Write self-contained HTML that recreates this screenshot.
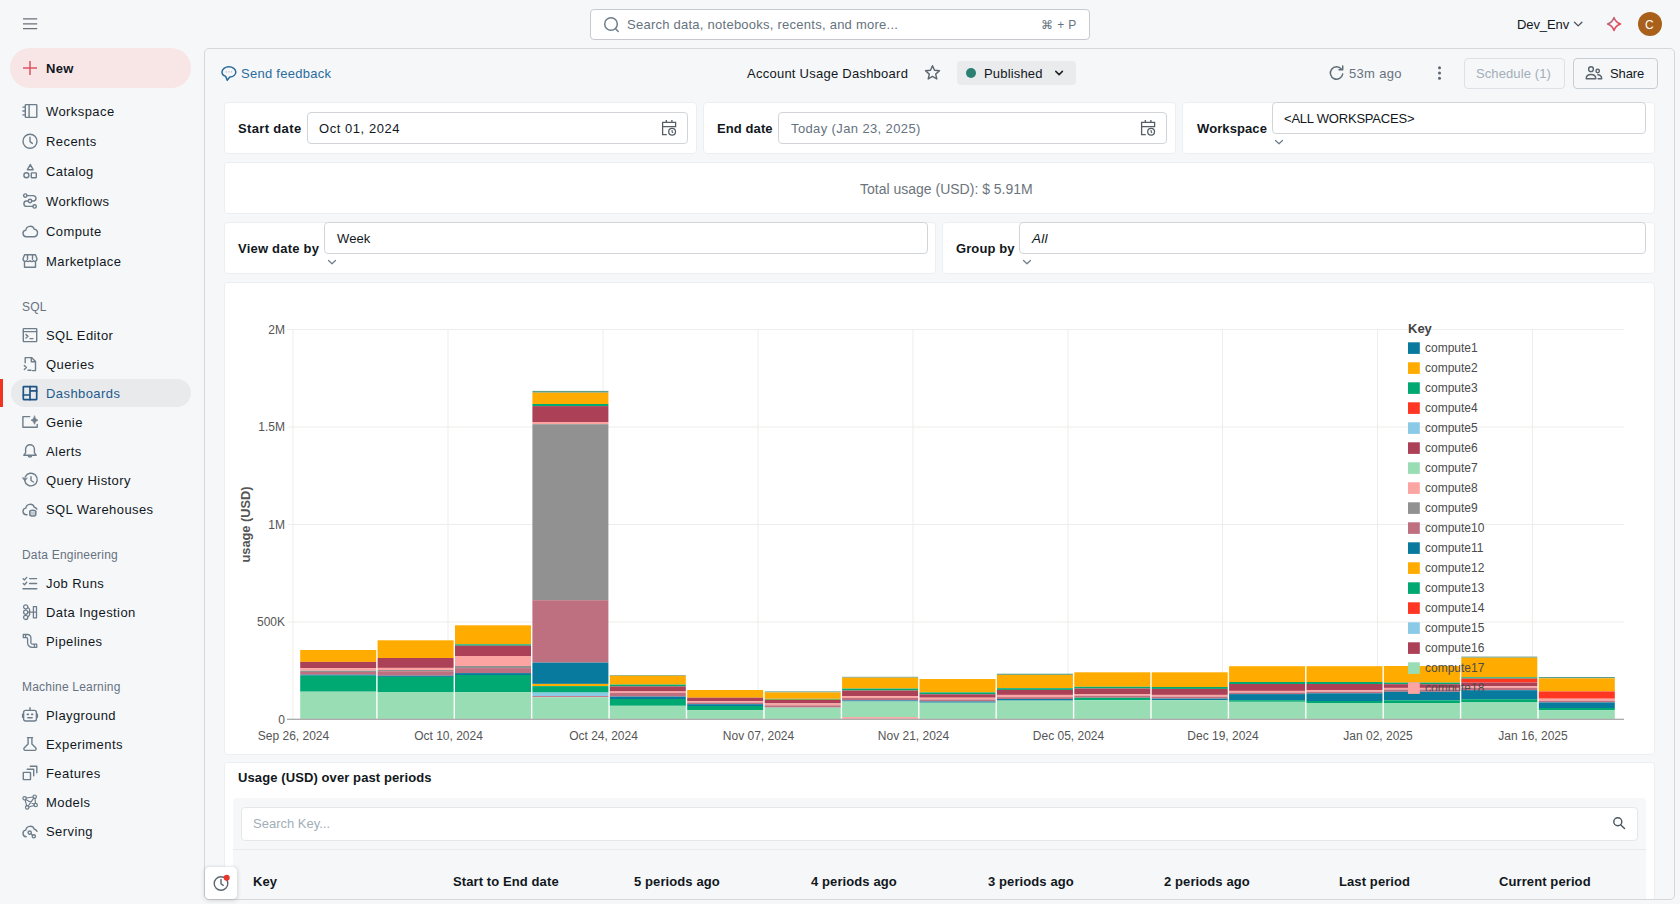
<!DOCTYPE html>
<html>
<head>
<meta charset="utf-8">
<title>Account Usage Dashboard</title>
<style>
*{box-sizing:border-box;margin:0;padding:0}
html,body{width:1680px;height:904px;overflow:hidden}
body{background:#F6F7F9;font-family:"Liberation Sans",sans-serif;color:#11171C;font-size:13px;position:relative}
.abs{position:absolute}
.t{position:absolute;white-space:nowrap;line-height:16px;letter-spacing:.35px}
.b{font-weight:bold}
svg{position:absolute;overflow:visible}
.ic{fill:none;stroke:#6E7D8A;stroke-width:1.4;stroke-linecap:round;stroke-linejoin:round}
/* sidebar */
.nav{left:46px;font-size:13px;letter-spacing:.42px;color:#11171C}
.sec{left:22px;font-size:12px;color:#66727E;letter-spacing:.2px}
/* container */
#main{left:204px;top:48px;width:1471px;height:852px;border:1px solid #D4D8DC;border-radius:5px;background:#F6F7F9}
.card{position:absolute;background:#fff;border:1px solid #ECEFF2;border-radius:4px}
.inp{position:absolute;background:#fff;border:1px solid #D1D5D9;border-radius:4px}
.lbl{font-weight:bold;font-size:13px;letter-spacing:.1px}
</style>
</head>
<body>

<!-- ===== TOP BAR ===== -->
<svg style="left:22px;top:17px" width="16" height="14" viewBox="0 0 16 14"><path d="M1 1.900h14.200M1 6.800h14.200M1 11.700h14.200" stroke="#6B7178" stroke-width="1.300" fill="none"/></svg>

<div class="inp" style="left:590px;top:8.500px;width:500px;height:31.500px;border-color:#C6CACE"></div>
<svg style="left:603px;top:16px" width="18" height="18" viewBox="0 0 18 18"><circle cx="8" cy="8" r="6.3" class="ic" style="stroke-width:1.5"/><path d="M12.6 12.8l2.6 2.7" class="ic" style="stroke-width:1.5"/></svg>
<div class="t" style="left:627px;top:17px;color:#66727E;font-size:13px;letter-spacing:.25px">Search data, notebooks, recents, and more...</div>
<div class="t" style="left:1041px;top:17px;color:#66727E;font-size:12px;letter-spacing:.4px">⌘ + P</div>

<div class="t" style="left:1517px;top:17px;font-size:13px;letter-spacing:-.1px">Dev_Env</div>
<svg style="left:1573px;top:20px" width="10" height="8" viewBox="0 0 10 8"><path d="M1.500 2.200L5.200 5.900l3.700-3.700" fill="none" stroke="#4A545C" stroke-width="1.300" stroke-linecap="round" stroke-linejoin="round"/></svg>
<svg style="left:1606px;top:16px" width="16" height="16" viewBox="0 0 16 16"><defs><linearGradient id="sg" x1="0" y1="0" x2="1" y2="1"><stop offset="0" stop-color="#8C7F8E"/><stop offset=".45" stop-color="#D8566C"/><stop offset="1" stop-color="#E8414F"/></linearGradient></defs><path d="M8 1.500Q9.600 6.400 14.500 8Q9.600 9.600 8 14.500Q6.400 9.600 1.500 8Q6.400 6.400 8 1.500z" fill="none" stroke="url(#sg)" stroke-width="1.500" stroke-linejoin="round"/></svg>
<div class="abs" style="left:1638px;top:12px;width:24px;height:24px;border-radius:12px;background:#A9601A"></div>
<div class="t" style="left:1645px;top:17px;color:#fff;font-size:12px;letter-spacing:0">C</div>

<!-- ===== SIDEBAR ===== -->
<div class="abs" style="left:10px;top:48px;width:181px;height:40px;border-radius:20px;background:#F8E6E7"></div>
<svg style="left:22px;top:60px" width="16" height="16" viewBox="0 0 16 16"><path d="M8 1v14M1 8h14" stroke="#DC5364" stroke-width="1.500" fill="none"/></svg>
<div class="t b" style="left:46px;top:61px;font-size:13px;letter-spacing:.3px">New</div>

<div class="t nav" style="top:104px">Workspace</div>
<div class="t nav" style="top:134px">Recents</div>
<div class="t nav" style="top:164px">Catalog</div>
<div class="t nav" style="top:194px">Workflows</div>
<div class="t nav" style="top:224px">Compute</div>
<div class="t nav" style="top:254px">Marketplace</div>

<div class="t sec" style="top:299px">SQL</div>
<div class="t nav" style="top:328px">SQL Editor</div>
<div class="t nav" style="top:357px">Queries</div>
<div class="abs" style="left:0;top:379px;width:3px;height:28px;background:#F0341F"></div>
<div class="abs" style="left:11px;top:379px;width:180px;height:28px;border-radius:14px;background:#E8EAEC"></div>
<div class="t nav" style="top:386px;color:#235A8C">Dashboards</div>
<div class="t nav" style="top:415px">Genie</div>
<div class="t nav" style="top:444px">Alerts</div>
<div class="t nav" style="top:473px">Query History</div>
<div class="t nav" style="top:502px">SQL Warehouses</div>

<div class="t sec" style="top:547px">Data Engineering</div>
<div class="t nav" style="top:576px">Job Runs</div>
<div class="t nav" style="top:605px">Data Ingestion</div>
<div class="t nav" style="top:634px">Pipelines</div>

<div class="t sec" style="top:679px">Machine Learning</div>
<div class="t nav" style="top:708px">Playground</div>
<div class="t nav" style="top:737px">Experiments</div>
<div class="t nav" style="top:766px">Features</div>
<div class="t nav" style="top:795px">Models</div>
<div class="t nav" style="top:824px">Serving</div>
<!-- sidebar icons: each 16x16 box at left 22 -->
<svg style="left:22px;top:103px" width="16" height="16" viewBox="0 0 16 16" class="ic"><rect x="3.3" y="1.6" width="11.5" height="12.8" rx=".7"/><path d="M7.100 1.600v12.800M.9 4.100h2.400M.9 8h2.400M.9 11.900h2.400"/></svg>
<svg style="left:22px;top:133px" width="16" height="16" viewBox="0 0 16 16" class="ic"><circle cx="8" cy="8.300" r="7"/><path d="M8 4.300v4.300l2.300 1.800"/></svg>
<svg style="left:22px;top:163px" width="16" height="16" viewBox="0 0 16 16" class="ic"><path d="M8.300 1.600l2.900 5.100H5.400z"/><circle cx="4.400" cy="12.300" r="2.500"/><rect x="9.300" y="9.900" width="5" height="4.800" rx=".4"/></svg>
<svg style="left:22px;top:193px" width="16" height="16" viewBox="0 0 16 16" class="ic"><circle cx="3.300" cy="2.600" r="1.700"/><circle cx="12.600" cy="13.400" r="1.700"/><path d="M5 2.600h6.300a2.700 2.700 0 0 1 0 5.400H4.600a2.700 2.700 0 0 0 0 5.400h6.300"/><circle cx="8" cy="8" r="1.700" fill="#F6F7F9"/></svg>
<svg style="left:22px;top:223px" width="16" height="16" viewBox="0 0 16 16" class="ic"><path d="M4.300 13.700a3.300 3.300 0 0 1-.5-6.560 4.400 4.400 0 0 1 8.500-.9 3.750 3.750 0 0 1-.4 7.460z"/></svg>
<svg style="left:22px;top:253px" width="16" height="16" viewBox="0 0 16 16" class="ic"><path d="M2.600 1.800h10.800l1.500 3.700v.9a2 2 0 0 1-3.450 1.300 2.300 2.300 0 0 1-3.450 0 2.300 2.300 0 0 1-3.450 0A2 2 0 0 1 1.100 6.400v-.9z"/><path d="M2.500 8.600v5.700h11V8.600M5.500 2v4.200M10.500 2v4.200"/></svg>

<svg style="left:22px;top:327px" width="16" height="16" viewBox="0 0 16 16" class="ic"><rect x="1.300" y="1.600" width="13.400" height="13" rx=".6"/><path d="M1.300 4.600h13.400M4 7.600l2 1.700-2 1.700M8 11.600h3"/></svg>
<svg style="left:22px;top:356px" width="16" height="16" viewBox="0 0 16 16" class="ic"><path d="M3.200 6.800V1.600h6.300l4 4v9H10.500M9.300 1.800v4h4M2.300 9.500l2.100 2-2.100 2M6 14.300h3"/></svg>
<svg style="left:22px;top:385px;stroke:#1F5585;stroke-width:1.700" width="16" height="16" viewBox="0 0 16 16" class="ic"><rect x="1.300" y="1.600" width="13.400" height="13" rx=".5"/><path d="M8 1.600v13M1.300 10h6.700M8 5.900h6.700"/></svg>
<svg style="left:22px;top:414px" width="16" height="16" viewBox="0 0 16 16" class="ic"><path d="M7.700 2.600H.9v10.700h14.300v-2.800"/><path d="M12.500 2.100Q13.100 5.600 16 6.200Q13.100 6.800 12.500 10.300Q11.900 6.800 9 6.200Q11.900 5.600 12.500 2.100z" fill="#6E7D8A" stroke-width=".7"/></svg>
<svg style="left:22px;top:443px" width="16" height="16" viewBox="0 0 16 16" class="ic"><path d="M8 1.700a4.400 4.400 0 0 0-4.400 4.400v3.700L1.800 12.200h12.400l-1.800-2.400V6.100A4.400 4.400 0 0 0 8 1.700zM6.100 12.400a2 2.400 0 0 0 3.800 0"/></svg>
<svg style="left:22px;top:472px" width="16" height="16" viewBox="0 0 16 16" class="ic"><path d="M3.300 4.700a6.300 6.300 0 1 1-.6 3.600M9 4.600v3.900l2.400 1.500"/><path d="M.7 6.100l2 2.600 2.300-2.200z" fill="#6E7D8A" stroke-width=".8"/></svg>
<svg style="left:22px;top:501px" width="16" height="16" viewBox="0 0 16 16" class="ic"><path d="M5 13.700h-.7a3.300 3.300 0 0 1-.5-6.560 4.400 4.400 0 0 1 8.500-.9 3.750 3.750 0 0 1 2.600 1.900"/><ellipse cx="10.800" cy="10.600" rx="3" ry="1.300"/><path d="M7.800 10.600v3.200c0 .7 1.300 1.300 3 1.300s3-.6 3-1.300v-3.200" fill="#C3CAD0"/></svg>

<svg style="left:22px;top:575px" width="16" height="16" viewBox="0 0 16 16" class="ic"><path d="M1.200 3.700l1.300 1.200 2.200-2.500M7.600 3.600h7M1.200 8.600l1.300 1.200 2.200-2.500M7.600 8.500h7M1 13.700h13.800"/></svg>
<svg style="left:22px;top:604px;stroke-width:1.3" width="16" height="16" viewBox="0 0 16 16" class="ic"><circle cx="3.700" cy="2.900" r="2.100"/><circle cx="3.700" cy="8.200" r="2.100"/><circle cx="3.700" cy="13.400" r="2.100"/><path d="M5.700 3.500c2.200.8 2.400 3.200 1.600 4.700M5.700 12.800c2.200-.8 2.400-3.200 1.600-4.700M6 8.200h8.400M11.600 2.600h2.900v11.200h-2.900M11.400 2.600v11.200"/></svg>
<svg style="left:22px;top:633px;stroke-width:1.3" width="16" height="16" viewBox="0 0 16 16" class="ic"><path d="M1.300 1.500h4.400a3.200 3.200 0 0 1 3.200 3.200v5a1.500 1.500 0 0 0 1.500 1.500h4.300v3.200h-4.600a4.500 4.500 0 0 1-4.500-4.500V5.700a1 1 0 0 0-1-1H1.300zM3.600 1.500v3.200M12.400 11.200v3.200"/></svg>

<svg style="left:22px;top:707px" width="16" height="16" viewBox="0 0 16 16" class="ic"><rect x="1.600" y="3.400" width="12.800" height="10.600" rx="2"/><path d="M8 .8v2.600M.6 7.200v3M15.400 7.200v3M5.800 10.700h4.400"/><path d="M5.400 7.300h.9M9.700 7.300h.9" stroke-width="1.700"/></svg>
<svg style="left:22px;top:736px" width="16" height="16" viewBox="0 0 16 16" class="ic"><path d="M5.400 1.600h5.200M6.100 1.600v6.300L2.300 11.700c-.9 1-.3 2.700 1.100 2.700h9.200c1.400 0 2-1.700 1.100-2.700L9.900 7.900V1.600"/></svg>
<svg style="left:22px;top:765px" width="16" height="16" viewBox="0 0 16 16" class="ic"><rect x="1.300" y="7.400" width="7.200" height="7.200" rx=".3"/><path d="M5.200 4.300h6.500v6.500M8.300 1.300h6.500v6.500"/></svg>
<svg style="left:22px;top:794px;stroke-width:1.2" width="16" height="16" viewBox="0 0 16 16" class="ic"><circle cx="12.700" cy="2.700" r="1.700"/><circle cx="2.600" cy="4.300" r="1.700"/><circle cx="13.700" cy="11" r="1.700"/><circle cx="5.200" cy="13.400" r="1.700"/><path d="M4.300 4l6.700-1M3.800 5.500l8.400 4.700M11.700 4.100L6.200 12M12.100 11.500l-5.300 1.500M3.100 5.900l1.600 5.900M13 4.400l.5 4.900"/></svg>
<svg style="left:22px;top:823px" width="16" height="16" viewBox="0 0 16 16" class="ic"><path d="M4.200 13.700a3.300 3.300 0 0 1-.4-6.560 4.400 4.400 0 0 1 8.500-.9 3.750 3.750 0 0 1 2.700 2.100"/><circle cx="7.700" cy="9.600" r="1.600"/><circle cx="11.800" cy="13.300" r="1.600"/><path d="M8.900 10.700l1.700 1.500"/></svg>


<!-- ===== MAIN CONTAINER ===== -->
<div id="main" class="abs"></div>

<!-- header row -->
<div class="t" style="left:241px;top:66px;color:#2A6C9C;font-size:13px;letter-spacing:.27px">Send feedback</div>
<div class="t" style="left:747px;top:66px;font-size:13px;letter-spacing:.25px">Account Usage Dashboard</div>
<div class="abs" style="left:957px;top:61px;width:119px;height:24px;border-radius:4px;background:#EAEBED"></div>
<div class="abs" style="left:965.5px;top:68px;width:10.400px;height:10.400px;border-radius:5.200px;background:#2B8073"></div>
<div class="t" style="left:984px;top:66px;font-size:13px;letter-spacing:.17px">Published</div>
<div class="t" style="left:1349px;top:66px;color:#66727E;font-size:13px;letter-spacing:.33px">53m ago</div>
<div class="inp" style="left:1464px;top:57.500px;width:101px;height:31px;background:#F6F7F9;border-color:#DCE2E8"></div>
<div class="t" style="left:1476px;top:66px;color:#A2AEB8;font-size:13px;letter-spacing:.1px">Schedule (1)</div>
<div class="inp" style="left:1573px;top:57.500px;width:85px;height:31px;background:#F6F7F9;border-color:#C5CED7"></div>
<div class="t" style="left:1610px;top:66px;font-size:13px;letter-spacing:-.1px">Share</div>
<!-- send feedback bubble -->
<svg style="left:221px;top:65px" width="17" height="17" viewBox="0 0 17 17" fill="none" stroke="#2A6C9C" stroke-width="1.5" stroke-linejoin="round"><path d="M7.900 1.800c-3.800 0-6.900 2.300-6.900 5.100 0 2 1.500 3.700 3.700 4.500l1.500 3.800 2.600-3.200c3.400-.3 6-2.400 6-5.100 0-2.800-3.100-5.100-6.900-5.100z"/><path d="M4.800 6.900h.7M7.600 6.900h.7M10.400 6.900h.7" stroke="#8493A0" stroke-width="1.300"/></svg>
<!-- star -->
<svg style="left:924px;top:64px" width="17" height="17" viewBox="0 0 17 17" fill="none" stroke="#5A6570" stroke-width="1.4" stroke-linejoin="round"><path d="M8.500 1.700l2 4.600 5 .5-3.800 3.300 1.100 4.900-4.300-2.600-4.300 2.600 1.100-4.900L1.500 6.800l5-.5z"/></svg>
<!-- published chevron -->
<svg style="left:1054px;top:69px" width="10" height="8" viewBox="0 0 10 8" fill="none" stroke="#1F272D" stroke-width="1.6" stroke-linecap="round" stroke-linejoin="round"><path d="M1.800 2.400l3.300 3.200 3.300-3.200"/></svg>
<!-- refresh -->
<svg style="left:1328px;top:64px" width="17" height="17" viewBox="0 0 17 17" fill="none" stroke="#5F6B76" stroke-width="1.5" stroke-linecap="round" stroke-linejoin="round"><path d="M13.400 5.100a6.200 6.200 0 1 0 1.300 4.900"/><path d="M14.700 2v3.700H11"/></svg>
<!-- kebab -->
<svg style="left:1436px;top:65px" width="6" height="16" viewBox="0 0 6 16" fill="#5A6570" stroke="none"><circle cx="3.500" cy="2.700" r="1.500"/><circle cx="3.500" cy="8" r="1.500"/><circle cx="3.500" cy="13.300" r="1.500"/></svg>
<!-- share people -->
<svg style="left:1585px;top:65px" width="18" height="16" viewBox="0 0 18 16" fill="none" stroke="#5A6570" stroke-width="1.400" stroke-linejoin="round"><circle cx="6" cy="4.200" r="2.400"/><path d="M1.200 13.700c0-2.600 2.100-4.200 4.800-4.200s4.800 1.600 4.800 4.200z"/><circle cx="12.700" cy="6" r="1.700"/><path d="M12.300 9.700c2.500-.2 4.400 1.300 4.400 4H12.600"/></svg>


<!-- row 1 filters -->
<div class="card" style="left:224px;top:102px;width:473px;height:52px"></div>
<div class="t lbl" style="left:238px;top:121px;letter-spacing:.35px">Start date</div>
<div class="inp" style="left:307px;top:112px;width:381px;height:32px"></div>
<div class="t" style="left:319px;top:121px;font-size:13px;letter-spacing:.55px">Oct 01, 2024</div>

<div class="card" style="left:703px;top:102px;width:473px;height:52px"></div>
<div class="t lbl" style="left:717px;top:121px">End date</div>
<div class="inp" style="left:778px;top:112px;width:389px;height:32px"></div>
<div class="t" style="left:791px;top:121px;font-size:13px;letter-spacing:.38px;color:#66727E">Today (Jan 23, 2025)</div>

<div class="card" style="left:1182px;top:102px;width:473px;height:52px"></div>
<div class="t lbl" style="left:1197px;top:121px">Workspace</div>
<div class="inp" style="left:1272px;top:102px;width:374px;height:32px"></div>
<div class="t" style="left:1284px;top:111px;font-size:13px;letter-spacing:-.21px">&lt;ALL WORKSPACES&gt;</div>
<svg style="left:1274px;top:139px" width="10" height="7" viewBox="0 0 10 7"><path d="M1.5 1.5L5 4.8l3.500-3.300" class="ic" style="stroke-width:1.2"/></svg>

<!-- row 2 total -->
<div class="card" style="left:224px;top:162px;width:1431px;height:52px"></div>
<div class="t" style="left:860px;top:181px;color:#6C747C;font-size:14px;letter-spacing:0">Total usage (USD): $ 5.91M</div>

<!-- row 3 -->
<div class="card" style="left:224px;top:222px;width:712px;height:52px"></div>
<div class="t lbl" style="left:238px;top:241px;letter-spacing:.22px">View date by</div>
<div class="inp" style="left:324px;top:222px;width:604px;height:32px"></div>
<div class="t" style="left:337px;top:231px;font-size:13px;letter-spacing:.1px">Week</div>
<svg style="left:327px;top:259px" width="10" height="7" viewBox="0 0 10 7"><path d="M1.5 1.500L5 4.800l3.500-3.300" class="ic" style="stroke-width:1.2"/></svg>

<div class="card" style="left:942px;top:222px;width:713px;height:52px"></div>
<div class="t lbl" style="left:956px;top:241px">Group by</div>
<div class="inp" style="left:1019px;top:222px;width:627px;height:32px"></div>
<div class="t" style="left:1032px;top:231px;font-size:13.5px;letter-spacing:.3px;font-style:italic">All</div>
<svg style="left:1022px;top:259px" width="10" height="7" viewBox="0 0 10 7"><path d="M1.5 1.500L5 4.800l3.500-3.300" class="ic" style="stroke-width:1.2"/></svg>

<!-- row 4 chart -->
<div class="card" style="left:224px;top:282px;width:1431px;height:473px"></div>
<svg style="left:0;top:0" width="1680" height="904" viewBox="0 0 1680 904" font-family="Liberation Sans, sans-serif">
<g stroke="#EDEDEB" stroke-width="1" fill="none">
<path d="M287.5 329.5H1624"/>
<path d="M287.5 427H1624"/>
<path d="M287.5 524.5H1624"/>
<path d="M287.5 622H1624"/>
<path d="M293 329.5V719"/>
<path d="M448 329.5V719"/>
<path d="M603 329.5V719"/>
<path d="M758 329.5V719"/>
<path d="M913 329.5V719"/>
<path d="M1068 329.5V719"/>
<path d="M1222.5 329.5V719"/>
<path d="M1377.5 329.5V719"/>
<path d="M1532.5 329.5V719"/>
</g>
<g shape-rendering="auto">
<rect x="300.2" y="650.0" width="76.0" height="11.9" fill="#FFAB00"/>
<rect x="300.2" y="661.9" width="76.0" height="6.2" fill="#AB4057"/>
<rect x="300.2" y="668.1" width="76.0" height="2.6" fill="#FCA4A1"/>
<rect x="300.2" y="670.7" width="76.0" height="1.3" fill="#919191"/>
<rect x="300.2" y="672.0" width="76.0" height="2.7" fill="#BF7080"/>
<rect x="300.2" y="674.7" width="76.0" height="1.0" fill="#077A9D"/>
<rect x="300.2" y="675.7" width="76.0" height="16.0" fill="#00A972"/>
<rect x="300.2" y="691.7" width="76.0" height="27.1" fill="#99DDB4"/>
<rect x="377.6" y="640.3" width="76.0" height="17.7" fill="#FFAB00"/>
<rect x="377.6" y="658.0" width="76.0" height="9.9" fill="#AB4057"/>
<rect x="377.6" y="667.9" width="76.0" height="2.1" fill="#FCA4A1"/>
<rect x="377.6" y="670.0" width="76.0" height="1.2" fill="#919191"/>
<rect x="377.6" y="671.2" width="76.0" height="4.5" fill="#BF7080"/>
<rect x="377.6" y="675.7" width="76.0" height="1.2" fill="#077A9D"/>
<rect x="377.6" y="676.9" width="76.0" height="15.5" fill="#00A972"/>
<rect x="377.6" y="692.4" width="76.0" height="26.4" fill="#99DDB4"/>
<rect x="455.0" y="625.3" width="76.0" height="19.0" fill="#FFAB00"/>
<rect x="455.0" y="644.3" width="76.0" height="1.4" fill="#00A972"/>
<rect x="455.0" y="645.7" width="76.0" height="10.3" fill="#AB4057"/>
<rect x="455.0" y="656.0" width="76.0" height="10.0" fill="#FCA4A1"/>
<rect x="455.0" y="666.0" width="76.0" height="2.1" fill="#919191"/>
<rect x="455.0" y="668.1" width="76.0" height="5.0" fill="#BF7080"/>
<rect x="455.0" y="673.1" width="76.0" height="1.9" fill="#077A9D"/>
<rect x="455.0" y="675.0" width="76.0" height="17.1" fill="#00A972"/>
<rect x="455.0" y="692.1" width="76.0" height="26.7" fill="#99DDB4"/>
<rect x="532.4" y="390.9" width="76.0" height="1.8" fill="#5E9E8C"/>
<rect x="532.4" y="392.7" width="76.0" height="11.3" fill="#FFAB00"/>
<rect x="532.4" y="404.0" width="76.0" height="2.1" fill="#00A972"/>
<rect x="532.4" y="406.1" width="76.0" height="15.9" fill="#AB4057"/>
<rect x="532.4" y="422.0" width="76.0" height="2.2" fill="#FCA4A1"/>
<rect x="532.4" y="424.2" width="76.0" height="176.0" fill="#919191"/>
<rect x="532.4" y="600.2" width="76.0" height="62.4" fill="#BF7080"/>
<rect x="532.4" y="662.6" width="76.0" height="21.3" fill="#077A9D"/>
<rect x="532.4" y="683.9" width="76.0" height="2.2" fill="#FFAB00"/>
<rect x="532.4" y="686.1" width="76.0" height="6.5" fill="#00A972"/>
<rect x="532.4" y="692.6" width="76.0" height="3.5" fill="#8BCAE7"/>
<rect x="532.4" y="696.1" width="76.0" height="1.2" fill="#BF7080"/>
<rect x="532.4" y="697.3" width="76.0" height="21.5" fill="#99DDB4"/>
<rect x="609.8" y="675.1" width="76.0" height="0.7" fill="#5E9E8C"/>
<rect x="609.8" y="675.8" width="76.0" height="8.8" fill="#FFAB00"/>
<rect x="609.8" y="684.6" width="76.0" height="1.8" fill="#00A972"/>
<rect x="609.8" y="686.4" width="76.0" height="5.1" fill="#AB4057"/>
<rect x="609.8" y="691.5" width="76.0" height="1.4" fill="#FCA4A1"/>
<rect x="609.8" y="692.9" width="76.0" height="3.7" fill="#BF7080"/>
<rect x="609.8" y="696.6" width="76.0" height="2.4" fill="#077A9D"/>
<rect x="609.8" y="699.0" width="76.0" height="6.8" fill="#00A972"/>
<rect x="609.8" y="705.8" width="76.0" height="13.0" fill="#99DDB4"/>
<rect x="687.2" y="690.0" width="76.0" height="7.7" fill="#FFAB00"/>
<rect x="687.2" y="697.7" width="76.0" height="3.5" fill="#AB4057"/>
<rect x="687.2" y="701.2" width="76.0" height="1.3" fill="#FCA4A1"/>
<rect x="687.2" y="702.5" width="76.0" height="1.7" fill="#BF7080"/>
<rect x="687.2" y="704.2" width="76.0" height="1.8" fill="#077A9D"/>
<rect x="687.2" y="706.0" width="76.0" height="4.1" fill="#00A972"/>
<rect x="687.2" y="710.1" width="76.0" height="8.7" fill="#99DDB4"/>
<rect x="764.7" y="691.4" width="76.0" height="1.0" fill="#5E9E8C"/>
<rect x="764.7" y="692.4" width="76.0" height="6.3" fill="#FFAB00"/>
<rect x="764.7" y="698.7" width="76.0" height="1.3" fill="#8FA84A"/>
<rect x="764.7" y="700.0" width="76.0" height="3.4" fill="#AB4057"/>
<rect x="764.7" y="703.4" width="76.0" height="1.9" fill="#FCA4A1"/>
<rect x="764.7" y="705.3" width="76.0" height="2.3" fill="#BF7080"/>
<rect x="764.7" y="707.6" width="76.0" height="11.2" fill="#99DDB4"/>
<rect x="842.1" y="676.8" width="76.0" height="0.9" fill="#5E9E8C"/>
<rect x="842.1" y="677.7" width="76.0" height="10.9" fill="#FFAB00"/>
<rect x="842.1" y="688.6" width="76.0" height="1.9" fill="#00A972"/>
<rect x="842.1" y="690.5" width="76.0" height="5.7" fill="#AB4057"/>
<rect x="842.1" y="696.2" width="76.0" height="1.8" fill="#FCA4A1"/>
<rect x="842.1" y="698.0" width="76.0" height="2.4" fill="#BF7080"/>
<rect x="842.1" y="700.4" width="76.0" height="1.1" fill="#077A9D"/>
<rect x="842.1" y="701.5" width="76.0" height="15.6" fill="#99DDB4"/>
<rect x="842.1" y="717.1" width="76.0" height="1.7" fill="#FCA4A1"/>
<rect x="919.5" y="679.0" width="76.0" height="13.4" fill="#FFAB00"/>
<rect x="919.5" y="692.4" width="76.0" height="1.9" fill="#00A972"/>
<rect x="919.5" y="694.3" width="76.0" height="3.4" fill="#AB4057"/>
<rect x="919.5" y="697.7" width="76.0" height="1.8" fill="#FCA4A1"/>
<rect x="919.5" y="699.5" width="76.0" height="2.0" fill="#BF7080"/>
<rect x="919.5" y="701.5" width="76.0" height="1.2" fill="#077A9D"/>
<rect x="919.5" y="702.7" width="76.0" height="16.1" fill="#99DDB4"/>
<rect x="996.9" y="673.7" width="76.0" height="1.2" fill="#5E9E8C"/>
<rect x="996.9" y="674.9" width="76.0" height="13.3" fill="#FFAB00"/>
<rect x="996.9" y="688.2" width="76.0" height="1.7" fill="#00A972"/>
<rect x="996.9" y="689.9" width="76.0" height="5.0" fill="#AB4057"/>
<rect x="996.9" y="694.9" width="76.0" height="2.2" fill="#FCA4A1"/>
<rect x="996.9" y="697.1" width="76.0" height="1.9" fill="#BF7080"/>
<rect x="996.9" y="699.0" width="76.0" height="1.6" fill="#077A9D"/>
<rect x="996.9" y="700.6" width="76.0" height="18.2" fill="#99DDB4"/>
<rect x="1074.3" y="672.3" width="76.0" height="14.5" fill="#FFAB00"/>
<rect x="1074.3" y="686.8" width="76.0" height="1.7" fill="#00A972"/>
<rect x="1074.3" y="688.5" width="76.0" height="5.6" fill="#AB4057"/>
<rect x="1074.3" y="694.1" width="76.0" height="1.6" fill="#FCA4A1"/>
<rect x="1074.3" y="695.7" width="76.0" height="2.1" fill="#BF7080"/>
<rect x="1074.3" y="697.8" width="76.0" height="2.4" fill="#00A972"/>
<rect x="1074.3" y="700.2" width="76.0" height="18.6" fill="#99DDB4"/>
<rect x="1151.7" y="672.3" width="76.0" height="14.7" fill="#FFAB00"/>
<rect x="1151.7" y="687.0" width="76.0" height="1.9" fill="#00A972"/>
<rect x="1151.7" y="688.9" width="76.0" height="6.0" fill="#AB4057"/>
<rect x="1151.7" y="694.9" width="76.0" height="1.7" fill="#FCA4A1"/>
<rect x="1151.7" y="696.6" width="76.0" height="2.0" fill="#BF7080"/>
<rect x="1151.7" y="698.6" width="76.0" height="1.6" fill="#077A9D"/>
<rect x="1151.7" y="700.2" width="76.0" height="18.6" fill="#99DDB4"/>
<rect x="1229.1" y="666.2" width="76.0" height="15.8" fill="#FFAB00"/>
<rect x="1229.1" y="682.0" width="76.0" height="2.0" fill="#00A972"/>
<rect x="1229.1" y="684.0" width="76.0" height="6.9" fill="#AB4057"/>
<rect x="1229.1" y="690.9" width="76.0" height="1.6" fill="#FCA4A1"/>
<rect x="1229.1" y="692.5" width="76.0" height="1.6" fill="#BF7080"/>
<rect x="1229.1" y="694.1" width="76.0" height="6.1" fill="#077A9D"/>
<rect x="1229.1" y="700.2" width="76.0" height="1.6" fill="#00A972"/>
<rect x="1229.1" y="701.8" width="76.0" height="17.0" fill="#99DDB4"/>
<rect x="1306.5" y="666.2" width="76.0" height="15.8" fill="#FFAB00"/>
<rect x="1306.5" y="682.0" width="76.0" height="2.0" fill="#00A972"/>
<rect x="1306.5" y="684.0" width="76.0" height="6.1" fill="#AB4057"/>
<rect x="1306.5" y="690.1" width="76.0" height="1.6" fill="#FCA4A1"/>
<rect x="1306.5" y="691.7" width="76.0" height="1.6" fill="#BF7080"/>
<rect x="1306.5" y="693.3" width="76.0" height="7.7" fill="#077A9D"/>
<rect x="1306.5" y="701.0" width="76.0" height="2.0" fill="#00A972"/>
<rect x="1306.5" y="703.0" width="76.0" height="15.8" fill="#99DDB4"/>
<rect x="1383.9" y="666.0" width="76.0" height="16.6" fill="#FFAB00"/>
<rect x="1383.9" y="682.6" width="76.0" height="1.6" fill="#00A972"/>
<rect x="1383.9" y="684.2" width="76.0" height="3.7" fill="#AB4057"/>
<rect x="1383.9" y="687.9" width="76.0" height="1.6" fill="#FCA4A1"/>
<rect x="1383.9" y="689.5" width="76.0" height="2.3" fill="#BF7080"/>
<rect x="1383.9" y="691.8" width="76.0" height="8.5" fill="#077A9D"/>
<rect x="1383.9" y="700.3" width="76.0" height="2.7" fill="#00A972"/>
<rect x="1383.9" y="703.0" width="76.0" height="15.8" fill="#99DDB4"/>
<rect x="1461.3" y="656.6" width="76.0" height="1.1" fill="#5E9E8C"/>
<rect x="1461.3" y="657.7" width="76.0" height="19.6" fill="#FFAB00"/>
<rect x="1461.3" y="677.3" width="76.0" height="1.3" fill="#00A972"/>
<rect x="1461.3" y="678.6" width="76.0" height="4.0" fill="#FF3621"/>
<rect x="1461.3" y="682.6" width="76.0" height="3.7" fill="#AB4057"/>
<rect x="1461.3" y="686.3" width="76.0" height="1.6" fill="#FCA4A1"/>
<rect x="1461.3" y="687.9" width="76.0" height="2.3" fill="#BF7080"/>
<rect x="1461.3" y="690.2" width="76.0" height="9.0" fill="#077A9D"/>
<rect x="1461.3" y="699.2" width="76.0" height="3.2" fill="#00A972"/>
<rect x="1461.3" y="702.4" width="76.0" height="16.4" fill="#99DDB4"/>
<rect x="1538.8" y="677.0" width="76.0" height="1.3" fill="#5E9E8C"/>
<rect x="1538.8" y="678.3" width="76.0" height="13.1" fill="#FFAB00"/>
<rect x="1538.8" y="691.4" width="76.0" height="7.3" fill="#FF3621"/>
<rect x="1538.8" y="698.7" width="76.0" height="2.1" fill="#FCA4A1"/>
<rect x="1538.8" y="700.8" width="76.0" height="1.6" fill="#BF7080"/>
<rect x="1538.8" y="702.4" width="76.0" height="5.6" fill="#077A9D"/>
<rect x="1538.8" y="708.0" width="76.0" height="2.3" fill="#00A972"/>
<rect x="1538.8" y="710.3" width="76.0" height="8.5" fill="#99DDB4"/>
</g>
<path d="M287 719.2H1624" stroke="#909090" stroke-width="1.1" fill="none"/>
<g fill="#555" font-size="12" text-anchor="end">
<text x="285" y="333.8">2M</text>
<text x="285" y="431.3">1.5M</text>
<text x="285" y="528.8">1M</text>
<text x="285" y="626.3">500K</text>
<text x="285" y="724.3">0</text>
</g>
<g fill="#555" font-size="12" text-anchor="middle">
<text x="293.5" y="740">Sep 26, 2024</text>
<text x="448.5" y="740">Oct 10, 2024</text>
<text x="603.5" y="740">Oct 24, 2024</text>
<text x="758.5" y="740">Nov 07, 2024</text>
<text x="913.5" y="740">Nov 21, 2024</text>
<text x="1068.5" y="740">Dec 05, 2024</text>
<text x="1223.0" y="740">Dec 19, 2024</text>
<text x="1378.0" y="740">Jan 02, 2025</text>
<text x="1533.0" y="740">Jan 16, 2025</text>
</g>
<text transform="translate(249.5 524.5) rotate(-90)" text-anchor="middle" font-size="12.8" font-weight="bold" fill="#555">usage (USD)</text>
<clipPath id="lc"><rect x="1400" y="315" width="240" height="379.5"/></clipPath>
<clipPath id="lt"><rect x="1400" y="315" width="240" height="376"/></clipPath>
<g clip-path="url(#lc)">
<text x="1408" y="332.5" font-size="13" font-weight="bold" fill="#444">Key</text>
<rect x="1408" y="342.3" width="11.8" height="11.6" fill="#077A9D"/>
<text x="1425" y="352.3" font-size="12" fill="#4C4C4C" clip-path="url(#lt)">compute1</text>
<rect x="1408" y="362.3" width="11.8" height="11.6" fill="#FFAB00"/>
<text x="1425" y="372.3" font-size="12" fill="#4C4C4C" clip-path="url(#lt)">compute2</text>
<rect x="1408" y="382.3" width="11.8" height="11.6" fill="#00A972"/>
<text x="1425" y="392.3" font-size="12" fill="#4C4C4C" clip-path="url(#lt)">compute3</text>
<rect x="1408" y="402.3" width="11.8" height="11.6" fill="#FF3621"/>
<text x="1425" y="412.3" font-size="12" fill="#4C4C4C" clip-path="url(#lt)">compute4</text>
<rect x="1408" y="422.3" width="11.8" height="11.6" fill="#8BCAE7"/>
<text x="1425" y="432.3" font-size="12" fill="#4C4C4C" clip-path="url(#lt)">compute5</text>
<rect x="1408" y="442.3" width="11.8" height="11.6" fill="#AB4057"/>
<text x="1425" y="452.3" font-size="12" fill="#4C4C4C" clip-path="url(#lt)">compute6</text>
<rect x="1408" y="462.3" width="11.8" height="11.6" fill="#99DDB4"/>
<text x="1425" y="472.3" font-size="12" fill="#4C4C4C" clip-path="url(#lt)">compute7</text>
<rect x="1408" y="482.3" width="11.8" height="11.6" fill="#FCA4A1"/>
<text x="1425" y="492.3" font-size="12" fill="#4C4C4C" clip-path="url(#lt)">compute8</text>
<rect x="1408" y="502.3" width="11.8" height="11.6" fill="#919191"/>
<text x="1425" y="512.3" font-size="12" fill="#4C4C4C" clip-path="url(#lt)">compute9</text>
<rect x="1408" y="522.3" width="11.8" height="11.6" fill="#BF7080"/>
<text x="1425" y="532.3" font-size="12" fill="#4C4C4C" clip-path="url(#lt)">compute10</text>
<rect x="1408" y="542.3" width="11.8" height="11.6" fill="#077A9D"/>
<text x="1425" y="552.3" font-size="12" fill="#4C4C4C" clip-path="url(#lt)">compute11</text>
<rect x="1408" y="562.3" width="11.8" height="11.6" fill="#FFAB00"/>
<text x="1425" y="572.3" font-size="12" fill="#4C4C4C" clip-path="url(#lt)">compute12</text>
<rect x="1408" y="582.3" width="11.8" height="11.6" fill="#00A972"/>
<text x="1425" y="592.3" font-size="12" fill="#4C4C4C" clip-path="url(#lt)">compute13</text>
<rect x="1408" y="602.3" width="11.8" height="11.6" fill="#FF3621"/>
<text x="1425" y="612.3" font-size="12" fill="#4C4C4C" clip-path="url(#lt)">compute14</text>
<rect x="1408" y="622.3" width="11.8" height="11.6" fill="#8BCAE7"/>
<text x="1425" y="632.3" font-size="12" fill="#4C4C4C" clip-path="url(#lt)">compute15</text>
<rect x="1408" y="642.3" width="11.8" height="11.6" fill="#AB4057"/>
<text x="1425" y="652.3" font-size="12" fill="#4C4C4C" clip-path="url(#lt)">compute16</text>
<rect x="1408" y="662.3" width="11.8" height="11.6" fill="#99DDB4"/>
<text x="1425" y="672.3" font-size="12" fill="#4C4C4C" clip-path="url(#lt)">compute17</text>
<rect x="1408" y="682.3" width="11.8" height="11.6" fill="#FCA4A1"/>
<text x="1425" y="692.3" font-size="12" fill="#4C4C4C" clip-path="url(#lt)">compute18</text>
</g>
</svg>

<!-- row 5 table -->
<div class="card" style="left:224px;top:762px;width:1431px;height:137px;border-bottom:none;border-radius:4px 4px 0 0"></div>
<div class="t lbl" style="left:238px;top:770px">Usage (USD) over past periods</div>
<div class="abs" style="left:233px;top:798px;width:1413px;height:101px;background:#F6F7F9;border-radius:4px 4px 0 0"></div>
<div class="inp" style="left:241px;top:807px;width:1397px;height:34px;border-color:#E3E8EC"></div>
<div class="t" style="left:253px;top:816px;color:#A2AEB8;font-size:13px;letter-spacing:0">Search Key...</div>
<div class="abs" style="left:233px;top:849px;width:1413px;height:1px;background:#E8ECF0"></div>
<div class="t lbl" style="left:253px;top:874px">Key</div>
<div class="t lbl" style="left:453px;top:874px">Start to End date</div>
<div class="t lbl" style="left:634px;top:874px">5 periods ago</div>
<div class="t lbl" style="left:811px;top:874px">4 periods ago</div>
<div class="t lbl" style="left:988px;top:874px">3 periods ago</div>
<div class="t lbl" style="left:1164px;top:874px">2 periods ago</div>
<div class="t lbl" style="left:1339px;top:874px">Last period</div>
<div class="t lbl" style="left:1499px;top:874px">Current period</div>
<!-- calendar icons -->
<svg style="left:661px;top:119px" width="16" height="17" viewBox="0 0 16 17" fill="none" stroke="#555E66" stroke-width="1.300"><path d="M5.800 15.700H1.600V3.300h13v4.400H1.600M5.300 1v2.300M10.900 1v2.300"/><circle cx="11.100" cy="12.800" r="3.400"/><path d="M11.100 11v1.900l1 .8" stroke-width="1.100"/></svg>
<svg style="left:1140px;top:119px" width="16" height="17" viewBox="0 0 16 17" fill="none" stroke="#555E66" stroke-width="1.300"><path d="M5.800 15.700H1.600V3.300h13v4.400H1.600M5.300 1v2.300M10.900 1v2.300"/><circle cx="11.100" cy="12.800" r="3.400"/><path d="M11.100 11v1.900l1 .8" stroke-width="1.100"/></svg>
<svg style="left:1612px;top:816px" width="14" height="14" viewBox="0 0 14 14" fill="none" stroke="#4A545C" stroke-width="1.400" stroke-linecap="round"><circle cx="5.800" cy="5.800" r="4"/><path d="M8.900 8.900l3.600 3.600"/></svg>
<!-- floating button -->
<div class="abs" style="left:205px;top:867px;width:32px;height:32px;border-radius:4px;background:#fff;box-shadow:0 1px 5px rgba(0,0,0,.18),0 0 1px rgba(0,0,0,.2)"></div>
<svg style="left:212px;top:874px" width="18" height="18" viewBox="0 0 18 18" fill="none" stroke="#5A6570" stroke-width="1.400" stroke-linecap="round"><circle cx="9" cy="9.500" r="6.800"/><path d="M9 5.500v4.200l2.200 1.700"/><circle cx="14.700" cy="3.700" r="3" fill="#E8352B" stroke="none"/></svg>


</body>
</html>
